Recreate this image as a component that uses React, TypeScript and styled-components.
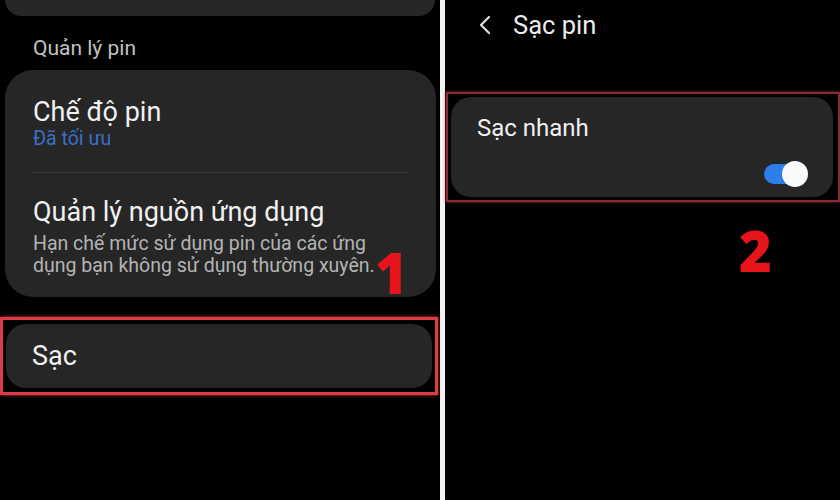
import React from "react";
import styled, { createGlobalStyle } from "styled-components";

const GlobalStyle = createGlobalStyle`
  *, *::before, *::after {
    box-sizing: border-box;
  }
  html, body {
    margin: 0;
    padding: 0;
    background: #000;
  }
  body {
    font-family: Roboto, "Noto Sans", "Liberation Sans", sans-serif;
  }
`;

const Screen = styled.div`
  width: 840px;
  height: 500px;
  display: flex;
  background: #000;
  overflow: hidden;
`;

const LeftPanel = styled.div`
  position: relative;
  width: 440px;
  display: flex;
  flex-direction: column;
`;

const Divider = styled.div`
  width: 5px;
  background: #f2f2f2;
`;

const RightPanel = styled.div`
  position: relative;
  flex: 1;
  display: flex;
  flex-direction: column;
`;

const TopCardEdge = styled.div`
  height: 16px;
  margin: 0 5px;
  background: #262626;
  border-radius: 0 0 24px 24px;
`;

const SectionLabel = styled.div`
  padding: 10px 33px 0;
  height: 54px;
  display: flex;
  align-items: center;
  font-size: 21px;
  color: #c2c2c2;
`;

const Card = styled.div<{ $radius?: number }>`
  background: #262626;
  border-radius: ${({ $radius }) => $radius ?? 28}px;
  display: flex;
  flex-direction: column;
`;

const GroupCard = styled(Card)`
  margin: 0 4px 0 5px;
  height: 227px;
`;

const Item = styled.div<{ $pad: string }>`
  padding: ${({ $pad }) => $pad};
  display: flex;
  flex-direction: column;
`;

const Spacer = styled.div<{ $h: number }>`
  height: ${({ $h }) => $h}px;
`;

const Title = styled.div<{ $size?: number }>`
  font-size: ${({ $size }) => $size ?? 27}px;
  color: #f0f0f0;
  line-height: 1.2;
`;

const Subtitle = styled.div<{ $blue?: boolean }>`
  font-size: ${({ $blue }) => ($blue ? 19.5 : 19.5)}px;
  line-height: 22px;
  color: ${({ $blue }) => ($blue ? "#3c6fc4" : "#b4b4b4")};
`;

const SubtitleBlock = styled.div`
  margin-top: 4px;
`;

const Separator = styled.div`
  height: 1px;
  margin: 0 28px;
  background: #3a3a3a;
`;

const Highlight = styled.div<{ $color: string; $width: number }>`
  border: ${({ $width }) => $width}px solid ${({ $color }) => $color};
  box-shadow: 0 0 3px ${({ $color }) => $color};
`;

const LeftHighlight = styled(Highlight)`
  margin: 20px 2px 0 0;
  height: 78px;
  padding: 4px 3px;
  display: flex;
`;

const SacCard = styled(Card)`
  flex: 1;
  justify-content: center;
  padding-left: 26px;
`;

const Header = styled.div`
  height: 50px;
  display: flex;
  align-items: center;
  padding-left: 33px;
  gap: 21px;
`;

const HeaderTitle = styled.div`
  font-size: 25.5px;
  color: #ececec;
`;

const RightHighlight = styled(Highlight)`
  margin: 42px 0 0 1px;
  height: 110px;
  padding: 3px 5px 3px 3px;
  display: flex;
`;

const FastCard = styled(Card)`
  flex: 1;
  padding: 17px 26px 0 26px;
  position: relative;
`;

const ToggleTrack = styled.div<{ $on: boolean }>`
  position: absolute;
  right: 27px;
  bottom: 13px;
  width: 42px;
  height: 20px;
  border-radius: 10px;
  background: ${({ $on }) => ($on ? "#2d7ee8" : "#555")};
`;

const ToggleKnob = styled.div`
  position: absolute;
  right: -2px;
  top: -3px;
  width: 26px;
  height: 26px;
  border-radius: 50%;
  background: #fafafa;
`;

const StepNumber = styled.div<{ $left: number; $top: number }>`
  position: absolute;
  left: ${({ $left }) => $left}px;
  top: ${({ $top }) => $top}px;
  font-family: "Open Sans", "Liberation Sans", sans-serif;
  font-weight: 800;
  font-size: 56px;
  line-height: 1;
  color: #e8141c;
`;

const BackIcon = () => (
  <svg width="14" height="22" viewBox="0 0 14 22">
    <path d="M11 3 L3 11 L11 19" fill="none" stroke="#e0e0e0" strokeWidth="2.2" strokeLinecap="round" strokeLinejoin="round" />
  </svg>
);

export default function App() {
  return (
    <>
      <GlobalStyle />
      <Screen>
        <LeftPanel>
          <TopCardEdge />
          <SectionLabel>Quản lý pin</SectionLabel>
          <GroupCard>
            <Item $pad="26px 28px 0 28px">
              <Title>Chế độ pin</Title>
              <Subtitle $blue>Đã tối ưu</Subtitle>
            </Item>
            <Spacer $h={22} />
            <Separator />
            <Item $pad="23px 28px 0 28px">
              <Title>Quản lý nguồn ứng dụng</Title>
              <SubtitleBlock>
                <Subtitle>Hạn chế mức sử dụng pin của các ứng</Subtitle>
                <Subtitle>dụng bạn không sử dụng thường xuyên.</Subtitle>
              </SubtitleBlock>
            </Item>
          </GroupCard>
          <LeftHighlight $color="#dc3b48" $width={3}>
            <SacCard $radius={20}>
              <Title>Sạc</Title>
            </SacCard>
          </LeftHighlight>
          <StepNumber $left={375} $top={244}>1</StepNumber>
        </LeftPanel>
        <Divider />
        <RightPanel>
          <Header>
            <BackIcon />
            <HeaderTitle>Sạc pin</HeaderTitle>
          </Header>
          <RightHighlight $color="#8a2a36" $width={2}>
            <FastCard $radius={20}>
              <Title $size={24}>Sạc nhanh</Title>
              <ToggleTrack $on>
                <ToggleKnob />
              </ToggleTrack>
            </FastCard>
          </RightHighlight>
          <StepNumber $left={294} $top={222}>2</StepNumber>
        </RightPanel>
      </Screen>
    </>
  );
}
